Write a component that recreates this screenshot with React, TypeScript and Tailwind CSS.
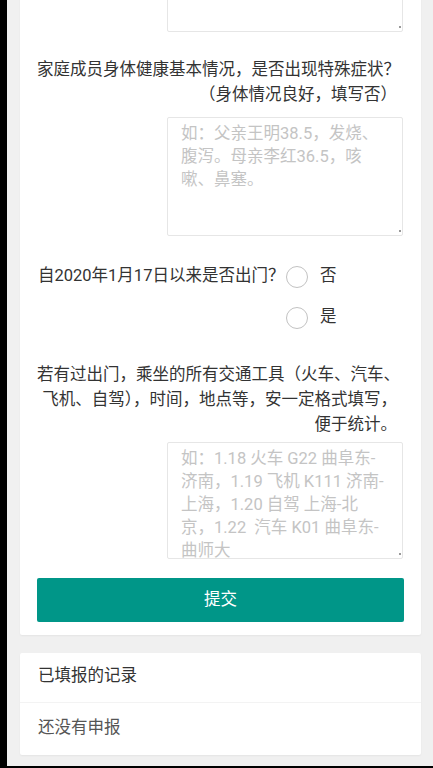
import React from "react";

const font = { fontFamily: '"Roboto", "Noto Sans CJK SC", sans-serif' };

function Area({ placeholder, h }: { placeholder?: string; h: string }) {
  return (
    <div className="relative ml-[130px]">
      <textarea
        placeholder={placeholder}
        className={`block w-[236px] ${h} resize-none overflow-hidden border border-[#e6e6e6] rounded-[2px] bg-white pl-[13px] pr-[4px] pt-[4px] text-[16.5px] leading-[23px] text-[#333] placeholder:text-[#c4c4c4] outline-none`}
        style={font}
      />
      <span className="absolute right-[3px] bottom-[4px] w-[2px] h-[2px] bg-[#777] rounded-full" />
    </div>
  );
}

function Radio({ label }: { label: string }) {
  return (
    <div className="flex items-center h-[41px]">
      <span className="w-[22px] h-[22px] rounded-full border-[1.5px] border-[#c2c2c2] bg-white" />
      <span className="ml-[12px] text-[16.5px] text-[#333]">{label}</span>
    </div>
  );
}

export default function App() {
  return (
    <div className="h-[768px] overflow-hidden bg-black flex" style={font}>
      <div className="w-[7px] shrink-0 bg-black" />
      <div className="flex-1 bg-[#f0f0f0] mb-[2px] pl-[13px] pr-[12px] overflow-hidden flex flex-col">
        <div className="mt-[-100px] bg-white rounded-[2px] shadow-[0_1px_2px_rgba(0,0,0,0.05)] pt-[15px] pb-[13px] px-[17px]">
          <Area h="h-[117px]" />
          <div className="mt-[25px] pr-[7px] text-right text-[16.5px] leading-[25px] text-[#333] whitespace-nowrap">
            家庭成员身体健康基本情况，是否出现特殊症状？
            <br />
            （身体情况良好，填写否）
          </div>
          <div className="mt-[10px]">
            <Area h="h-[119px]" placeholder={"如：父亲王明38.5，发烧、\n腹泻。母亲李红36.5，咳\n嗽、鼻塞。"} />
          </div>
          <div className="mt-[20px] flex">
            <div className="w-[249px] shrink-0 pl-[1px] h-[41px] flex items-center text-[16.5px] text-[#333] whitespace-nowrap">
              自2020年1月17日以来是否出门？
            </div>
            <div className="flex flex-col">
              <Radio label="否" />
              <Radio label="是" />
            </div>
          </div>
          <div className="mt-[24px] pr-[7px] text-right text-[16.5px] leading-[25px] text-[#333] whitespace-nowrap">
            若有过出门，乘坐的所有交通工具（火车、汽车、
            <br />
            飞机、自驾），时间，地点等，安一定格式填写，
            <br />
            便于统计。
          </div>
          <div className="mt-[5px]">
            <Area
              h="h-[117px]"
              placeholder={"如：1.18 火车 G22 曲阜东-\n济南，1.19 飞机 K111 济南-\n上海，1.20 自驾 上海-北\n京，1.22  汽车 K01 曲阜东-\n曲师大"}
            />
          </div>
          <button className="mt-[19px] w-full h-[44px] bg-[#009688] rounded-[2px] text-white text-[16.5px]">
            提交
          </button>
        </div>
        <div className="mt-[18px] bg-white rounded-[2px] shadow-[0_1px_2px_rgba(0,0,0,0.05)]">
          <div className="h-[50px] pb-[2px] flex items-center px-[18px] border-b border-[#f3f3f3] text-[16.5px] text-[#333]">
            已填报的记录
          </div>
          <div className="h-[52px] pb-[2px] flex items-center px-[18px] text-[16.5px] text-[#555]">
            还没有申报
          </div>
        </div>
      </div>
    </div>
  );
}
